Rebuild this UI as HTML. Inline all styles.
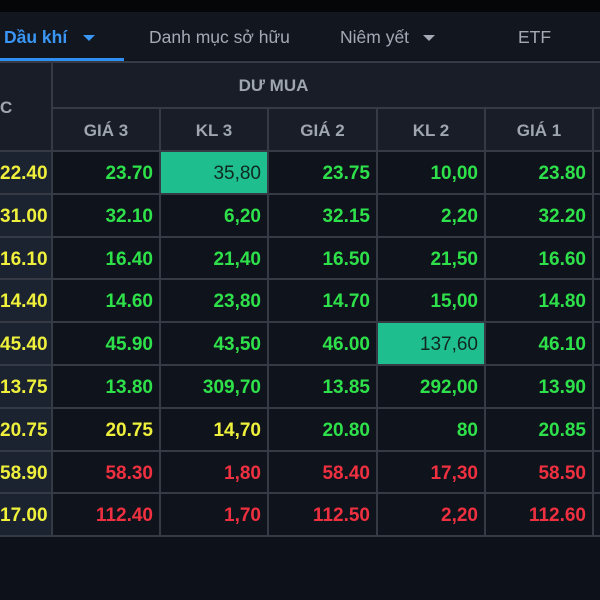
<!DOCTYPE html>
<html><head><meta charset="utf-8"><style>
*{margin:0;padding:0;box-sizing:border-box}
body{width:600px;height:600px;background:#0d111a;overflow:hidden;font-family:"Liberation Sans",Arial,sans-serif;position:relative}
.top{position:absolute;left:0;top:0;width:600px;height:12px;background:#050608}
.tabs{position:absolute;left:0;top:12px;width:600px;height:48px;background:#12161f}
.tab{position:absolute;top:15px;font-size:17.5px;color:#a4a9b4}
.ul{position:absolute;left:0;top:58px;width:124px;height:3px;background:#2f8ff0}
.tri{display:inline-block;width:0;height:0;border-left:6px solid transparent;border-right:6px solid transparent;border-top:6px solid currentColor;vertical-align:middle;margin-left:14px}
.grid{position:absolute;left:-2px;top:61px;display:grid;gap:2px;padding:2px;background:#353a45;
grid-template-columns:51px 106px 106px 107px 106px 106px 20px;grid-template-rows:44px 41px repeat(9,40.8px)}
.grid div{background:#0f131b;font-weight:bold;font-size:19px;text-align:right;padding-right:6px;line-height:44px}
.grid .h{background:#181d27;color:#a0a6b0;font-size:17px;text-align:center;padding:0;line-height:44px}
.grid .l{background:#1b2230;color:#eef03c;padding-right:6px}
.g{color:#2ee04a}.y{color:#eef03c}.r{color:#ef3040}
.grid .hl{background:#1fbe8f;color:#10291f;font-weight:normal}
</style></head><body>
<div class="top"></div>
<div class="tabs">
<div class="tab" style="left:4px;color:#3a97f5;font-weight:bold">Dầu khí<span class="tri" style="margin-left:16px"></span></div>
<div class="tab" style="left:149px">Danh mục sở hữu</div>
<div class="tab" style="left:340px">Niêm yết<span class="tri"></span></div>
<div class="tab" style="left:518px">ETF</div>
</div>
<div class="ul"></div>
<div class="grid">
<div class="h" style="grid-row:1/3;text-align:left;line-height:90px;padding-left:0">C</div>
<div class="h" style="grid-column:2/8;line-height:46px;padding-right:120px">DƯ MUA</div>
<div class="h">GIÁ 3</div><div class="h">KL 3</div><div class="h">GIÁ 2</div><div class="h">KL 2</div><div class="h">GIÁ 1</div><div class="h"></div>

<div class="l">22.40</div><div class="g">23.70</div><div class="hl">35,80</div><div class="g">23.75</div><div class="g">10,00</div><div class="g">23.80</div><div></div>
<div class="l">31.00</div><div class="g">32.10</div><div class="g">6,20</div><div class="g">32.15</div><div class="g">2,20</div><div class="g">32.20</div><div></div>
<div class="l">16.10</div><div class="g">16.40</div><div class="g">21,40</div><div class="g">16.50</div><div class="g">21,50</div><div class="g">16.60</div><div></div>
<div class="l">14.40</div><div class="g">14.60</div><div class="g">23,80</div><div class="g">14.70</div><div class="g">15,00</div><div class="g">14.80</div><div></div>
<div class="l">45.40</div><div class="g">45.90</div><div class="g">43,50</div><div class="g">46.00</div><div class="hl">137,60</div><div class="g">46.10</div><div></div>
<div class="l">13.75</div><div class="g">13.80</div><div class="g">309,70</div><div class="g">13.85</div><div class="g">292,00</div><div class="g">13.90</div><div></div>
<div class="l">20.75</div><div class="y">20.75</div><div class="y">14,70</div><div class="g">20.80</div><div class="g">80</div><div class="g">20.85</div><div></div>
<div class="l">58.90</div><div class="r">58.30</div><div class="r">1,80</div><div class="r">58.40</div><div class="r">17,30</div><div class="r">58.50</div><div></div>
<div class="l">17.00</div><div class="r">112.40</div><div class="r">1,70</div><div class="r">112.50</div><div class="r">2,20</div><div class="r">112.60</div><div></div>
</div>
</body></html>
